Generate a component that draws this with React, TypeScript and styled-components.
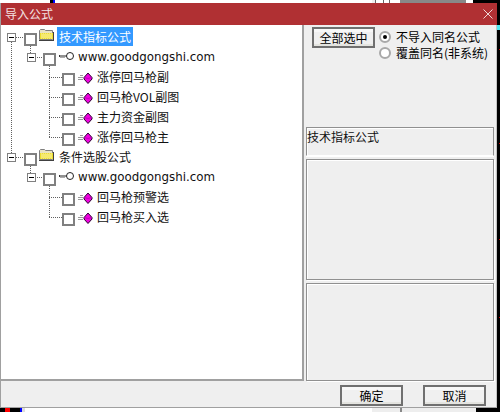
import React from "react";
import styled, { createGlobalStyle } from "styled-components";

const Global = createGlobalStyle`
  html, body { margin: 0; padding: 0; width: 500px; height: 412px; overflow: hidden; background: #fff; }
  * { box-sizing: border-box; }
`;

const cjk = `"Noto Sans CJK SC", "Liberation Sans", sans-serif`;

const Desktop = styled.div`
  width: 500px;
  height: 412px;
  display: grid;
  grid-template-rows: 3px 405px 4px;
  grid-template-columns: 497px 3px;
  background: #fff;
  font-family: ${cjk};
  font-size: 12px;
  color: #000;
`;
const TopStrip = styled.div`
  grid-column: 1 / 3;
  background: linear-gradient(to right, #fff 0 50px, #000 50px 53px, #00f 53px 55px, #fff 55px 372px, #eee 372px 375px, #666 375px 376px, #fff 376px 383px, #666 383px 384px, #fff 384px 389px, #666 389px 390px, #fff 390px 400px, #888 400px 466px, #fff 466px 473px, #000 473px);
`;
const RightStrip = styled.div`
  background:
    linear-gradient(#4de8f0, #4de8f0) 0 22px / 100% 5px no-repeat,
    linear-gradient(#d00000, #d00000) 2px 46px / 1px 1px no-repeat,
    linear-gradient(#d00000, #d00000) 2px 140px / 1px 1px no-repeat,
    linear-gradient(#d00000, #d00000) 2px 236px / 1px 1px no-repeat,
    linear-gradient(#d00000, #d00000) 2px 314px / 1px 1px no-repeat,
    #000;
`;
const BottomStrip = styled.div`
  grid-column: 1 / 3;
  background: linear-gradient(to right, #000 0 5px, #f00 5px 10px, #000 10px 20px, #00f 20px 22px, #ddd 22px 25px, #fff 25px 372px, #eee 372px 400px, #888 400px 402px, #eee 402px 476px, #000 476px);
`;
const Dialog = styled.div`
  display: flex;
  flex-direction: column;
  background: #efefef;
  border-left: 1px solid #a0a0a0;
`;
const TitleBar = styled.div`
  height: 22px;
  flex: none;
  background: #b03033;
  color: #f4e4e4;
  display: flex;
  align-items: center;
  justify-content: space-between;
  padding: 0 4px 1px 4px;
  line-height: 16px;
`;
const Body = styled.div`
  height: 356px;
  flex: none;
  display: flex;
`;
const TreePane = styled.div`
  position: relative;
  width: 303px;
  flex: none;
  background: #fff;
  border-right: 2px solid #a0a0a0;
  border-bottom: 2px solid #a0a0a0;
  padding-top: 2px;
`;
const TreeLines = styled.svg`
  position: absolute;
  left: -1px;
  top: -25px;
  pointer-events: none;
`;
const Row = styled.div<{ $level: number }>`
  height: 20px;
  display: flex;
  align-items: flex-start;
  padding-left: ${(p) => 23 + p.$level * 19}px;
`;
const Check = styled.span`
  width: 13px;
  height: 13px;
  margin-top: 6px;
  flex: none;
  background: #fff;
  border: 2px solid #808080;
`;
const NodeIcon = styled.svg`
  flex: none;
  display: block;
`;
const Label = styled.span<{ $selected?: boolean }>`
  height: 19px;
  line-height: 19px;
  padding: 0 2px;
  white-space: nowrap;
  color: ${(p) => (p.$selected ? "#fff" : "#111")};
  background: ${(p) => (p.$selected ? "#3399ff" : "transparent")};
`;
const Url = styled.span`
  font-family: "DejaVu Sans", sans-serif;
  font-size: 11.85px;
  line-height: 21px;
  padding-left: 2px;
  white-space: nowrap;
  color: #111;
`;
const Side = styled.div`
  flex: 1;
  display: flex;
  flex-direction: column;
  padding: 2px 2px 0 2px;
  border-right: 1px solid #c4c4c4;
`;
const TopControls = styled.div`
  height: 100px;
  flex: none;
  display: flex;
  padding-left: 6px;
`;
const Button = styled.button`
  width: 63px;
  height: 21px;
  padding: 0;
  font: inherit;
  color: #000;
  background: linear-gradient(to bottom, #f8f8f8 0 3px, #f0f0f0 3px 15px, #e4e4e0 15px);
  border: 2px solid #707070;
  border-radius: 0;
  line-height: 17px;
`;
const Radios = styled.div`
  display: flex;
  flex-direction: column;
  margin-left: 4px;
  padding-top: 2px;
`;
const RadioRow = styled.div`
  height: 16px;
  display: flex;
  align-items: center;
  gap: 5px;
  white-space: nowrap;
  line-height: 16px;
`;
const Radio = styled.span<{ $on?: boolean }>`
  width: 12px;
  height: 12px;
  flex: none;
  border-radius: 50%;
  background: #fff;
  border: 2px solid #a8a8a8;
  display: flex;
  align-items: center;
  justify-content: center;
  &::after {
    content: "";
    width: 4px;
    height: 4px;
    border-radius: 50%;
    background: ${(p) => (p.$on ? "#000" : "transparent")};
  }
`;
const GroupBox = styled.div<{ $h: number }>`
  height: ${(p) => p.$h}px;
  flex: none;
  border: 1px solid #909090;
  border-bottom-color: #fff;
  box-shadow: inset 1px 1px 0 #fff, 0 1px 0 #fff;
  margin-bottom: 3px;
`;
const FilledBox = styled(GroupBox)`
  border-bottom-color: #909090;
  box-shadow: 1px 1px 0 #fff, inset 1px 1px 0 #fff;
`;
const SectionLabel = styled.div`
  height: 22px;
  line-height: 18px;
  color: #111;
`;
const Footer = styled.div`
  flex: 1;
  display: flex;
  justify-content: flex-end;
  gap: 20px;
  padding: 4px 10px 0 0;
  border-bottom: 1px solid #a0a0a0;
  border-right: 1px solid #c4c4c4;
`;

const Folder = () => (
  <NodeIcon width="18" height="16" viewBox="0 0 18 16" style={{ marginLeft: 1, marginRight: 1 }}>
    <path d="M1.5 12.5V3.5l1-1h4l1 1h7v9z" fill="#e9e3c4" stroke="#7f7f7f" />
    <path d="M2 6h13v6H2z" fill="#ecdc30" />
    <path d="M3 7h1M5 7h1M7 7h1M9 7h1M11 7h1M13 7h1M4 8h1M6 8h1M8 8h1M10 8h1M12 8h1M3 9h1M5 9h1M7 9h1M9 9h1M11 9h1M13 9h1M4 10h1M6 10h1M8 10h1M10 10h1M12 10h1M3 11h1M5 11h1M7 11h1M9 11h1M11 11h1M13 11h1" stroke="#fff8b0" />
    <path d="M1 13.5h15" stroke="#404040" />
    <path d="M15.5 5v8" stroke="#404040" />
  </NodeIcon>
);
const Key = () => (
  <NodeIcon width="18" height="18" viewBox="0 0 18 18" style={{ marginLeft: 2 }}>
    <circle cx="12" cy="9" r="3.5" fill="#fff" stroke="#222" />
    <path d="M1 9h7.5" stroke="#222" fill="none" />
    <path d="M1.5 8v2" stroke="#333" fill="none" />
    <path d="M2 10.5h5" stroke="#aaa" fill="none" />
  </NodeIcon>
);
const Formula = () => (
  <NodeIcon width="17" height="18" viewBox="0 0 17 18" style={{ marginLeft: 3, marginTop: 1 }}>
    <path d="M0 9.5h5M0 11.5h5M2 7.5h3" stroke="#9a9a9a" />
    <path d="M6 9.5 L10 5 L14 9.5 V11 L10 15.5 L6 11z" fill="#f000e0" stroke="#2a0030" />
    <path d="M6.5 9.5 L10 10.5 L13.5 9.5" stroke="#a000a0" strokeWidth="0.6" fill="none" />
  </NodeIcon>
);
const Close = () => (
  <svg width="10" height="10" viewBox="0 0 10 10" style={{ display: "block" }}>
    <path d="M.5.5l9 9M9.5.5l-9 9" stroke="#f0d8d8" fill="none" />
  </svg>
);

const Expander = ({ x, y }: { x: number; y: number }) => (
  <g>
    <rect x={x + 0.5} y={y + 0.5} width="8" height="8" fill="#fff" stroke="#808080" />
    <path d={`M${x + 2} ${y + 4.5}h5`} stroke="#000" />
  </g>
);
const dots = { stroke: "#606060", strokeDasharray: "1 1", fill: "none" } as const;

const Lines = () => (
  <TreeLines width="304" height="300">
    <path {...dots} d="M11.5 42V153M16 37.5h8M30.5 46v7M35 57.5h8M49.5 66v72M49 77.5h13M49 97.5h13M49 117.5h13M49 137.5h13" />
    <path {...dots} d="M16 157.5h8M30.5 166v7M35 177.5h8M49.5 186v32M49 197.5h13M49 217.5h13" />
    <Expander x={7} y={33} />
    <Expander x={27} y={53} />
    <Expander x={7} y={153} />
    <Expander x={27} y={173} />
  </TreeLines>
);

const Leaf = ({ text }: { text: string }) => (
  <Row $level={2}>
    <Check />
    <Formula />
    <Label>{text}</Label>
  </Row>
);
const Group = ({ text, selected }: { text: string; selected?: boolean }) => (
  <Row $level={0}>
    <Check />
    <Folder />
    <Label $selected={selected}>{text}</Label>
  </Row>
);
const Site = () => (
  <Row $level={1}>
    <Check />
    <Key />
    <Url>www.goodgongshi.com</Url>
  </Row>
);

export default function App() {
  return (
    <>
      <Global />
      <Desktop>
        <TopStrip />
        <Dialog>
          <TitleBar>
            <span>导入公式</span>
            <Close />
          </TitleBar>
          <Body>
            <TreePane>
              <Lines />
              <Group text="技术指标公式" selected />
              <Site />
              <Leaf text="涨停回马枪副" />
              <Leaf text="回马枪VOL副图" />
              <Leaf text="主力资金副图" />
              <Leaf text="涨停回马枪主" />
              <Group text="条件选股公式" />
              <Site />
              <Leaf text="回马枪预警选" />
              <Leaf text="回马枪买入选" />
            </TreePane>
            <Side>
              <TopControls>
                <Button>全部选中</Button>
                <Radios>
                  <RadioRow>
                    <Radio $on />
                    不导入同名公式
                  </RadioRow>
                  <RadioRow>
                    <Radio />
                    覆盖同名(非系统)
                  </RadioRow>
                </Radios>
              </TopControls>
              <GroupBox $h={29}>
                <SectionLabel>技术指标公式</SectionLabel>
              </GroupBox>
              <FilledBox $h={121} />
              <FilledBox $h={98} />
            </Side>
          </Body>
          <Footer>
            <Button>确定</Button>
            <Button>取消</Button>
          </Footer>
        </Dialog>
        <RightStrip />
        <BottomStrip />
      </Desktop>
    </>
  );
}
